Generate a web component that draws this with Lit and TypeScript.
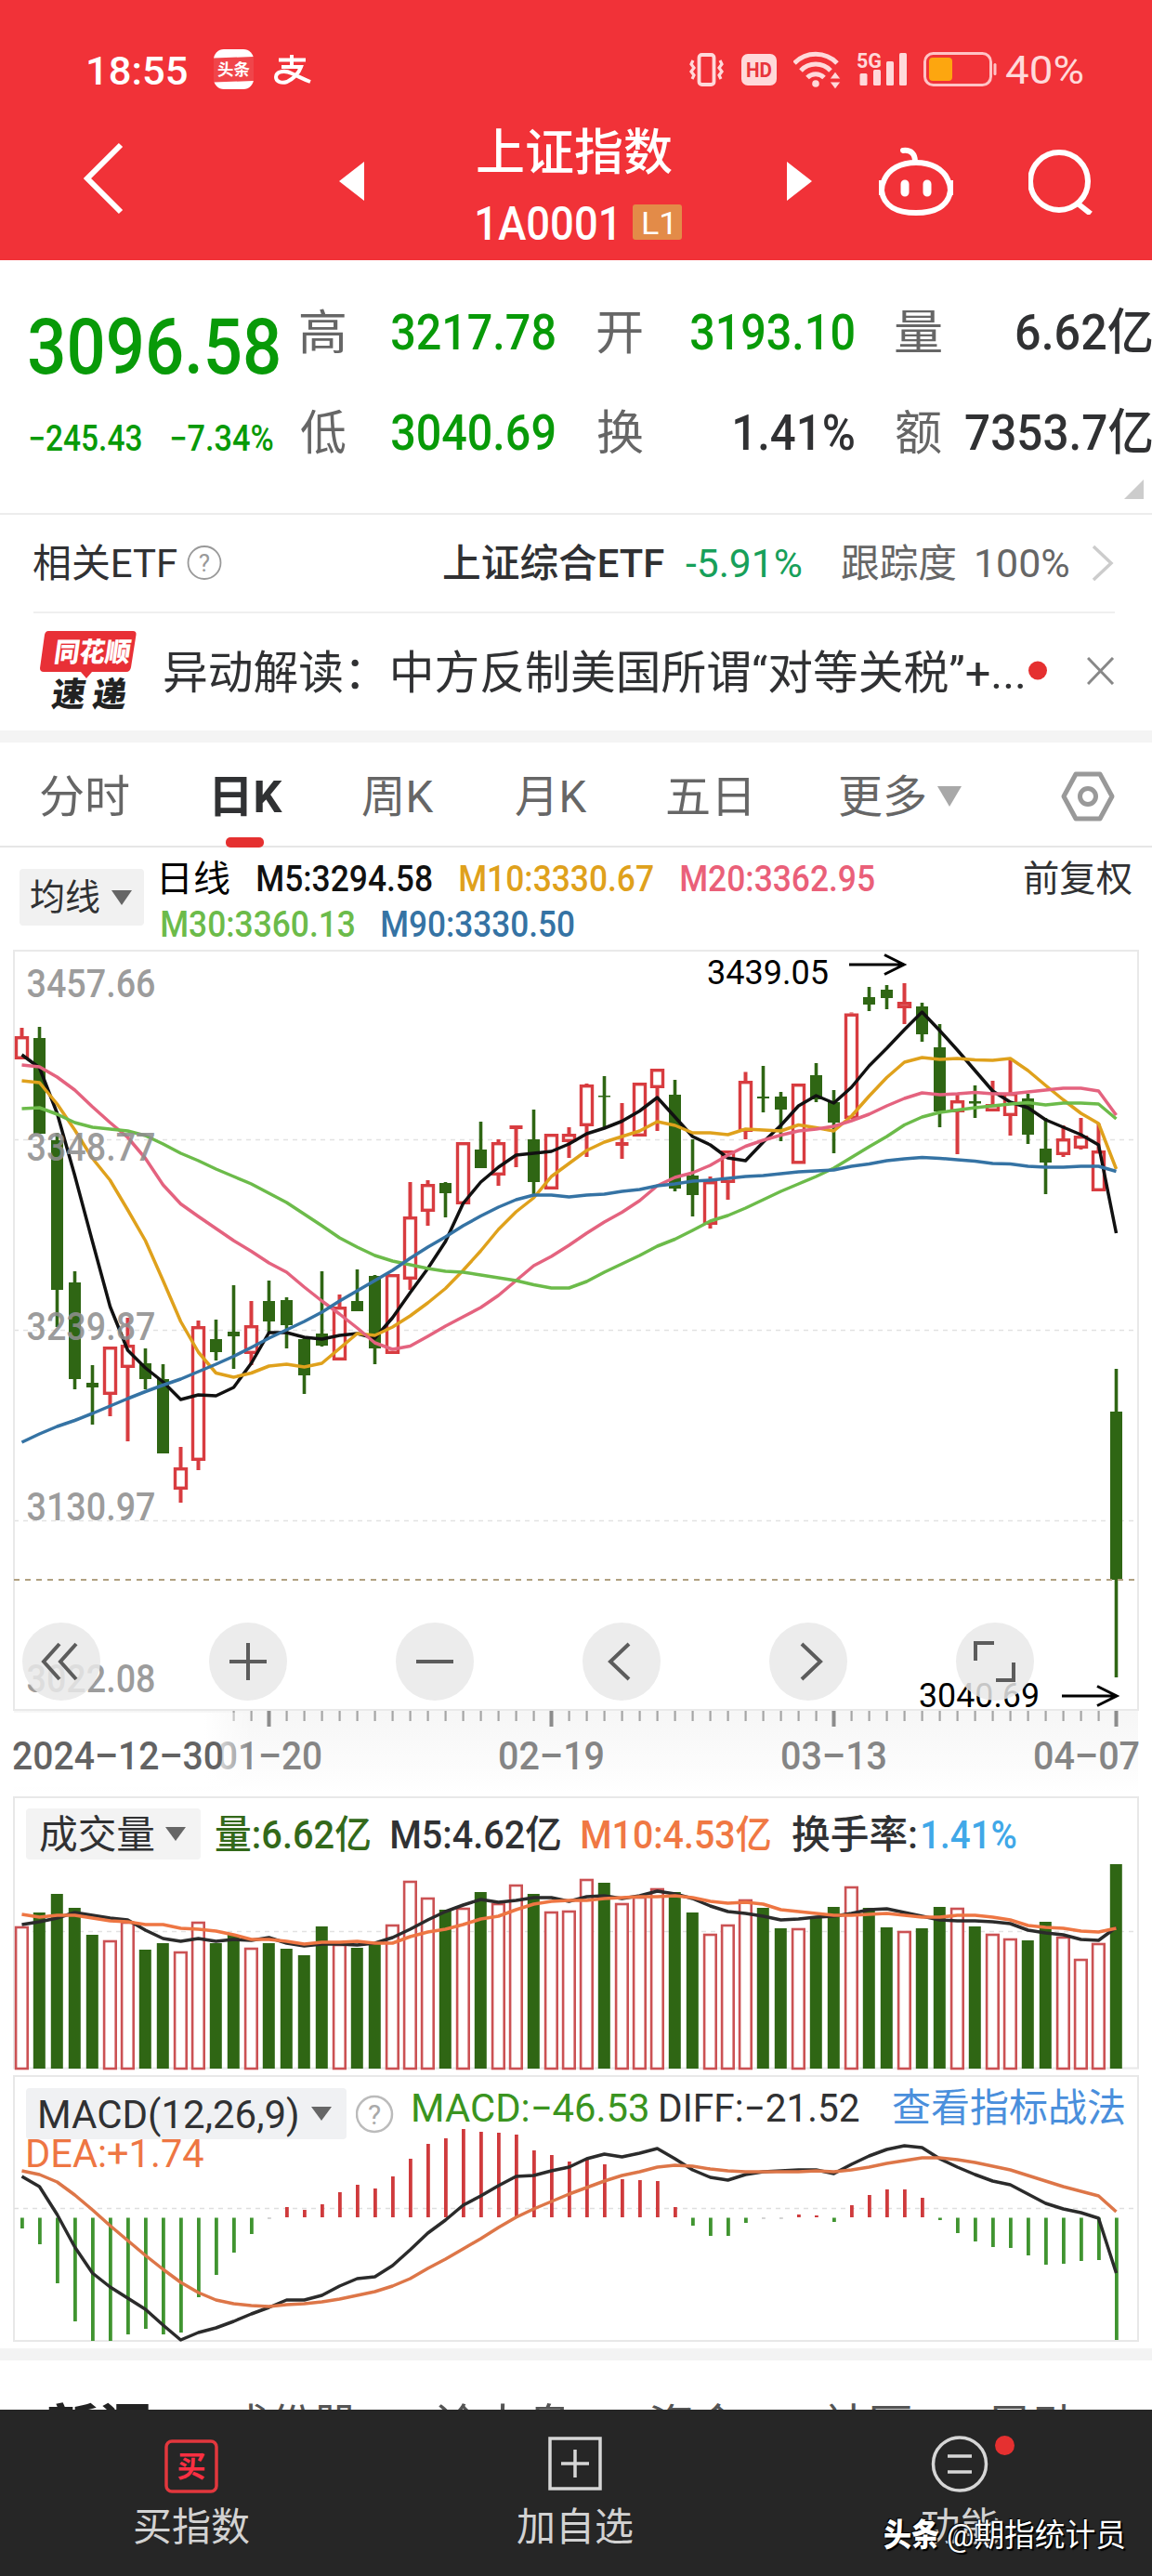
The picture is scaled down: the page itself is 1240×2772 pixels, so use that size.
import { LitElement, html, css, svg } from "lit";
import { customElement, property } from "lit/decorators.js";

/* ---------- chart geometry ---------- */
const STEP = 19;
const X0 = 23.5;
const cx = (i: number) => X0 + i * STEP;
const line = (ys: number[]) => ys.map((y, i) => `${cx(i)},${y}`).join(" ");

/* r = rising, g = falling; then high, body top, body bottom, low */
type Candle = [string, number, number, number, number];
const candles: Candle[] = [
  ["r", 86, 95, 120, 120], ["g", 85, 97, 200, 200], ["g", 199, 207, 368, 408], ["g", 348, 360, 464, 475],
  ["g", 449, 468, 473, 513], ["r", 429, 429, 481, 504], ["r", 398, 427, 452, 531], ["g", 431, 447, 464, 475],
  ["g", 448, 464, 544, 544], ["r", 537, 559, 583, 597], ["r", 401, 407, 552, 562], ["g", 400, 421, 435, 444],
  ["g", 363, 413, 418, 453], ["r", 380, 406, 437, 449], ["g", 358, 380, 402, 414], ["g", 376, 379, 406, 431],
  ["g", 418, 421, 460, 480], ["g", 348, 415, 428, 429], ["r", 373, 386, 444, 444], ["g", 346, 380, 391, 391],
  ["g", 352, 353, 431, 448], ["r", 351, 351, 437, 437], ["r", 252, 289, 357, 368], ["r", 250, 254, 284, 299],
  ["g", 252, 253, 264, 290], ["r", 209, 209, 276, 276], ["g", 187, 217, 237, 237], ["r", 206, 209, 245, 256],
  ["r", 191, 191, 195, 236], ["g", 174, 206, 252, 267], ["r", 200, 200, 260, 260], ["r", 193, 200, 209, 226],
  ["r", 146, 147, 192, 225], ["g", 138, 159, 160.5, 194], ["r", 167, 209, 213, 227], ["r", 145, 145, 203, 203],
  ["r", 130, 130, 151, 197], ["g", 142, 158, 259, 262], ["g", 206, 245, 266, 289], ["r", 246, 251, 298, 302],
  ["r", 218, 218, 253, 271], ["r", 133.5, 143, 198, 206], ["g", 127, 160, 162, 177], ["g", 155, 160, 174, 208],
  ["r", 146, 146, 232.5, 232.5], ["g", 124, 137, 163, 166], ["g", 153, 166, 188, 221], ["r", 69.5, 70.5, 184, 184],
  ["g", 42, 53, 61, 68], ["g", 40, 45, 54, 66], ["r", 38, 58, 65, 82], ["g", 59, 63, 93, 101],
  ["g", 82, 107, 176, 193], ["r", 158, 164, 177, 222], ["g", 148, 165, 167.5, 183], ["r", 143, 168, 176, 176],
  ["r", 119, 156, 181, 202], ["g", 157, 162, 201, 211], ["g", 183, 216, 231, 265], ["r", 191, 205, 223, 225],
  ["r", 183, 202, 216, 217], ["r", 189, 218, 262, 262], ["g", 453, 499, 680, 785],
];
const m5 = [115, 129, 178, 245, 316, 386, 433, 452, 467, 486, 481, 482, 473, 447, 414, 414, 419, 421, 417, 415, 420, 398, 371, 345, 316, 275, 252, 236, 223, 221, 219, 211, 200, 194, 186.5, 175.5, 161, 182, 203, 212, 226, 229, 209, 191, 170, 159, 167, 150, 127, 108, 88, 69, 89, 110, 132, 154, 166, 172, 185, 193, 201, 212, 307];
const m10 = [143, 145, 168, 196, 226.5, 250, 282, 315, 358, 402, 435, 457.5, 462, 457.5, 450, 448, 451, 447, 431, 415, 417, 408, 396, 382, 366.5, 347, 326, 303, 284, 269, 246, 232, 218, 209, 203, 197, 187, 191, 199, 199, 201, 195, 196, 197, 190.5, 193.5, 197, 181, 159.5, 139.5, 123, 118, 120, 119, 120.5, 121, 119, 132, 148, 163.5, 178, 189, 238];
const m20 = [126, 128, 139, 153, 171, 188, 204, 226.5, 255, 275.5, 289, 302, 315, 326.5, 339, 349, 365, 380, 394, 409, 425, 432, 428.5, 418, 407, 397, 387, 374, 358, 342, 332, 320, 307, 295, 284.5, 272, 256, 247, 242, 234, 223, 213.5, 207, 201.5, 197, 195, 192, 186, 179, 170, 162, 156, 158, 157, 155.5, 157, 157, 155, 153, 151, 151, 154, 180];
const m30 = [173, 172, 179, 188, 193, 195, 197, 202, 211, 221, 229, 238, 246, 254, 264, 274, 286.5, 299, 312, 322, 331, 337, 341, 345, 348, 349, 352, 355, 358, 362.5, 366, 366, 359, 349, 340, 331, 321, 313.5, 304, 294, 288, 280, 271, 262, 254, 246, 237, 225.5, 214, 203, 190.5, 182, 177, 174.5, 172, 170, 168, 166.5, 169, 167, 167, 168, 184];
const m90 = [532, 523, 515, 508.5, 501, 493, 485, 477.5, 470.5, 464, 456, 448, 439.5, 430, 420, 411, 402, 392, 380, 369, 358, 347, 334, 322, 311, 299, 288.5, 279, 271, 266, 266, 268, 266, 265, 262, 260, 256, 254, 251, 250, 248, 246, 245, 243, 241, 240, 239, 235, 232.5, 229, 227, 225.5, 226.5, 228, 229.5, 232, 232.5, 235, 236, 236, 235, 235, 240.5];

const volume = [143, 128, 108, 123, 152, 158, 138, 168, 161, 170, 138, 161, 152, 166, 161, 167, 174, 143, 162, 166, 162, 141, 94, 112, 125, 123, 106, 118, 98, 108, 127, 126, 92, 96, 118, 111, 102, 106, 128, 151, 141, 114, 123, 145, 145, 132, 122, 100, 123, 144, 148, 145, 122, 123, 143, 151, 156, 158, 138, 154, 178, 161, 76];
const vol5 = [141, 138, 134, 128, 131, 134, 136, 147, 156, 159, 156, 159, 157, 158, 155, 161, 164, 162, 162, 163, 161, 155, 146, 136, 127, 120, 114, 117, 115, 112, 112, 116, 111, 110, 113, 110, 105, 108, 113, 121, 127, 129, 132, 136, 135, 133, 132, 129, 125, 124, 128, 132, 136, 137, 137, 138, 140, 147, 150, 152, 157, 158, 144];
const vol10 = [130, 133, 131, 131, 134, 137, 138, 141, 141, 145, 146, 148, 152, 157, 157, 159, 162, 160, 160, 159, 161, 161, 154, 149, 146, 141, 135, 132, 125, 119, 116, 115, 115, 113, 112, 111, 111, 110, 112, 116, 118, 117, 119, 125, 127, 129, 131, 131, 130, 129, 131, 133, 133, 131, 131, 133, 136, 142, 144, 145, 148, 149, 145];

const macd = [178, 195, 237, 278, 299, 299, 292, 286, 292, 290, 252, 228, 204, 184, 167.5, 155, 158, 152, 139, 131, 135, 122, 103, 87, 81, 71, 74, 75, 77, 94, 99, 106, 103, 109, 125, 126, 127, 155, 175, 186, 186, 172, 167.5, 167.5, 163, 164, 171, 153, 142, 136, 136, 145, 169, 183, 192, 198, 199, 207, 217, 216, 213, 212, 298];
const diff = [122, 133, 163, 198, 226, 241, 253, 265, 282, 298, 290, 285, 278, 270, 263, 255, 255, 250, 240, 232, 230, 218, 201, 183, 169, 153, 143, 132, 122, 121, 116, 112, 103, 98, 101, 97, 92, 103, 115, 123, 126, 120, 117, 116, 115, 115, 119, 109, 100, 93, 89, 91, 103, 112, 120, 127, 131, 141, 151, 157, 161, 167, 226];
const dea = [116, 120, 128, 142, 158, 175, 191, 207, 222, 236, 247, 255, 259, 261, 262, 260, 259, 257, 254, 250, 246, 240, 232, 221, 211, 200, 189, 177, 166, 157, 149, 141, 134, 127, 121, 117, 112, 110, 111, 114, 116, 117, 117, 117, 117, 116, 117, 115, 112, 108, 105, 102, 102, 104, 107, 111, 115, 121, 127, 133, 138, 143, 160];

const GREEN = "#2f6614";
const RED = "#d83c40";

/* Text whose ink is scaled horizontally to an exact width. */
@customElement("fit-text")
export class FitText extends LitElement {
  @property() text = "";
  @property({ type: Number }) w = 0;
  static styles = css`
    :host { display: block; white-space: pre; flex: none; line-height: 1; }
    .t { display: block; width: max-content; transform-origin: 0 50%; }
  `;
  render() {
    return html`<span class="t">${this.text}</span>`;
  }
  firstUpdated() {
    this.style.width = `${this.w}px`;
    const cs = getComputedStyle(this);
    const ctx = document.createElement("canvas").getContext("2d")!;
    ctx.font = `${cs.fontStyle} ${cs.fontWeight} ${cs.fontSize} ${cs.fontFamily}`;
    const m = ctx.measureText(this.text);
    const ink = m.actualBoundingBoxLeft + m.actualBoundingBoxRight;
    const el = this.renderRoot.querySelector<HTMLElement>(".t")!;
    if (ink > 0) el.style.transform = `translateY(.03em) scaleX(${this.w / ink}) translateX(${m.actualBoundingBoxLeft}px)`;
  }
}

const shared = css`
  :host { display: block; }
  svg { display: block; flex: none; }
`;

@customElement("app-header")
export class AppHeader extends LitElement {
  static styles = [shared, css`
    :host { background: #f13238; color: #fff; height: 280px; }
    .status { display: grid; height: 70px; padding-top: 40px; align-items: center;
      grid-template-columns: 95px 135px 64px 448px 56px 56px 68px 72px 89px auto; }
    .clock { grid-column: 2; font-size: 43px; font-weight: 500; }
    .pct { font-size: 42px; color: #ffd9da; }
    .bar { display: grid; height: 170px; align-items: center;
      grid-template-columns: 90px 275px 149px 333px 98px 162px auto; }
    .back { grid-column: 2; margin-top: -6px; }
    .name { display: flex; height: 70px; margin-top: 18px; align-items: center; font-size: 53px; font-weight: 500; }
    .code { display: flex; height: 82px; align-items: center; gap: 20px; font-size: 50px; font-weight: 500; }
    .badge { width: 53px; height: 38px; border-radius: 3px; background: #e38b48; display: flex;
      align-items: center; justify-content: center; font-size: 34px; font-weight: 400; }
    .mini { font: 700 22px Roboto, "Noto Sans CJK SC", sans-serif; }
    .app { font: 700 17px "Noto Sans CJK SC", sans-serif; }
  `];
  render() {
    return html`
      <div class="status">
        <fit-text class="clock" w="106" text="18:55"></fit-text>
        <svg width="44" height="44" viewBox="0 0 44 44">
          <rect width="43" height="43" rx="11" fill="#fff" />
          <path d="M0 9.500L43 8v26L0 35.500z" fill="#f0454a" />
          <text class="app" x="4" y="28" fill="#fff" textLength="35" lengthAdjust="spacingAndGlyphs">头条</text>
        </svg>
        <svg width="42" height="42" viewBox="0 0 42 42" fill="none" stroke="#fff" stroke-width="4">
          <path d="M20 5v12M6 10.500h29M9 18h21c-3 8-9 13-15 16-6 2-12 0-12-5 0-6 9-8 17-4 7 3 12 6 20 9" />
        </svg>
        <svg width="38" height="38" viewBox="0 0 38 38" fill="none" stroke="#ffd9da" stroke-width="3.800">
          <rect x="10.500" y="3" width="16" height="32" rx="3" />
          <path d="M4 9l-2 4 3 4-3 4 3 4-2 4M33 9l2 4-3 4 3 4-3 4 2 4" stroke-width="3.200" />
        </svg>
        <svg width="38" height="36" viewBox="0 0 38 36">
          <rect y="1" width="38" height="34" rx="7" fill="#ffd9da" />
          <text class="mini" x="5" y="26" fill="#e8353b" textLength="28" lengthAdjust="spacingAndGlyphs">HD</text>
        </svg>
        <svg width="52" height="42" viewBox="0 0 52 42" fill="none" stroke="#ffd9da" stroke-width="5">
          <path d="M1 14a32 32 0 0 1 46 0M8 22a22 22 0 0 1 32 0M15 29.500a12.500 12.500 0 0 1 18 0" />
          <circle cx="24" cy="36" r="3.800" fill="#ffd9da" stroke="none" />
          <path d="M39 31l6-8 6 8zM39 34l6 8 6-8z" fill="#ffd9da" stroke="#f13238" stroke-width="1" />
        </svg>
        <svg width="56" height="42" viewBox="0 0 56 42" fill="#ffd9da">
          <text class="mini" x="0" y="19" textLength="27" lengthAdjust="spacingAndGlyphs">5G</text>
          <rect x="3.500" y="25" width="8" height="13" rx="1.500" /><rect x="18" y="21" width="8" height="17" rx="1.500" />
          <rect x="32" y="12" width="8" height="26" rx="1.500" /><rect x="46" y="3" width="8" height="35" rx="1.500" />
        </svg>
        <svg width="80" height="38" viewBox="0 0 80 38">
          <rect x="1.500" y="1.500" width="71" height="34" rx="9" fill="none" stroke="#ffc3c5" stroke-width="3" />
          <rect x="6" y="6" width="25" height="25" rx="4" fill="#fda60f" />
          <rect x="75.500" y="12" width="3" height="13" rx="1.500" fill="#ffc3c5" />
        </svg>
        <fit-text class="pct" w="82" text="40%"></fit-text>
      </div>
      <div class="bar">
        <svg class="back" width="44" height="78" viewBox="0 0 44 78" fill="none" stroke="#fff" stroke-width="6">
          <path d="M40 3L4 39l36 36" />
        </svg>
        <svg width="28" height="42" viewBox="0 0 28 42"><path d="M27 0v42L0 21z" fill="#fff" /></svg>
        <div>
          <div class="name"><fit-text w="209" text="上证指数"></fit-text></div>
          <div class="code">
            <fit-text w="147" text="1A0001"></fit-text>
            <span class="badge"><fit-text w="31" text="L1"></fit-text></span>
          </div>
        </div>
        <svg width="28" height="42" viewBox="0 0 28 42"><path d="M0 0v42l27-21z" fill="#fff" /></svg>
        <svg width="82" height="78" viewBox="0 0 82 78" fill="none" stroke="#fff" stroke-width="6">
          <path d="M41 19C24 19 12 26 7 37c-2 4-3 8-3 12 2 17 17 24 37 24s35-7 37-24c0-4-1-8-3-12-5-11-17-18-34-18z" />
          <path d="M40 18c0-8-4-13-13-12" stroke-linecap="round" />
          <path d="M4 38v16M78 38v16" />
          <path d="M29 42v9M53 42v9" stroke-width="9" stroke-linecap="round" />
        </svg>
        <svg width="72" height="72" viewBox="0 0 72 72" fill="none" stroke="#fff" stroke-width="6">
          <circle cx="33" cy="36" r="31" /><path d="M53 60l14 11" />
        </svg>
      </div>`;
  }
}

@customElement("quote-summary")
export class QuoteSummary extends LitElement {
  static styles = [shared, css`
    :host { position: relative; height: 272px; border-bottom: 2px solid #ececec; background: #fff; overflow: hidden; }
    .wrap { display: grid; grid-template-columns: 292px auto; padding: 22px 0 0 32px; }
    .price { height: 138px; display: flex; align-items: center; font-size: 84px; font-weight: 500; color: #089a08; }
    .chg { height: 62px; display: flex; align-items: center; gap: 32px; font-size: 38px; font-weight: 500; color: #089a08; }
    .cells { display: grid; grid-template-columns: 49px 224px 46px 49px 227px 45px 49px 227px; grid-auto-rows: 108px; align-items: center; }
    .k { font-size: 51px; color: #666; }
    .v { font-size: 53px; font-weight: 500; color: #303133; justify-self: end; }
    .g { color: #089a08; }
    .gap { grid-column: span 2; display: grid; grid-template-columns: 46px 49px; }
    .gap2 { grid-column: span 2; display: grid; grid-template-columns: 45px 49px; }
    .gap .k, .gap2 .k { grid-column: 2; }
    .corner { position: absolute; right: 9px; bottom: 15px; }
  `];
  render() {
    return html`
      <div class="wrap">
        <div>
          <div class="price"><fit-text w="268" text="3096.58"></fit-text></div>
          <div class="chg"><fit-text w="120" text="−245.43"></fit-text><fit-text w="110" text="−7.34%"></fit-text></div>
        </div>
        <div class="cells">
          <fit-text class="k" w="47" text="高"></fit-text><fit-text class="v g" w="175" text="3217.78"></fit-text>
          <div class="gap"><fit-text class="k" w="48" text="开"></fit-text></div><fit-text class="v g" w="175" text="3193.10"></fit-text>
          <div class="gap2"><fit-text class="k" w="49" text="量"></fit-text></div><fit-text class="v" w="146" text="6.62亿"></fit-text>
          <fit-text class="k" w="48" text="低"></fit-text><fit-text class="v g" w="175" text="3040.69"></fit-text>
          <div class="gap"><fit-text class="k" w="49" text="换"></fit-text></div><fit-text class="v" w="128" text="1.41%"></fit-text>
          <div class="gap2"><fit-text class="k" w="49" text="额"></fit-text></div><fit-text class="v" w="201" text="7353.7亿"></fit-text>
        </div>
      </div>
      <svg class="corner" width="21" height="21" viewBox="0 0 21 21"><path d="M21 0v21H0z" fill="#ccc" /></svg>`;
  }
}

@customElement("info-rows")
export class InfoRows extends LitElement {
  static styles = [shared, css`
    :host { background: #fff; border-bottom: 13px solid #f4f4f4; }
    .etf { display: grid; height: 104px; align-items: center; font-size: 42px; color: #303133; margin: 0 40px 0 36px;
      grid-template-columns: 165px 277px 260px 168px 145px 124px auto; border-bottom: 2px solid #efefef; }
    .b { font-weight: 500; }
    .up { color: #17a05a; }
    .dim { color: #666; }
    .news { display: grid; height: 126px; align-items: center; grid-template-columns: 134px 930px 63px auto; padding-left: 43px; }
    .txt { font-size: 49px; color: #303133; }
    .logo1 { font: 900 29px "Noto Sans CJK SC", sans-serif; }
    .logo2 { font: 900 36px "Noto Sans CJK SC", sans-serif; }
    .q { font: 400 26px Roboto, sans-serif; }
    .lift { margin-top: -3px; }
  `];
  render() {
    return html`
      <div class="etf">
        <fit-text w="154" text="相关ETF"></fit-text>
        <svg width="38" height="38" viewBox="0 0 38 38">
          <circle cx="19" cy="18.500" r="17.500" fill="none" stroke="#999" stroke-width="1.800" />
          <text class="q" x="19" y="28" text-anchor="middle" fill="#999">?</text>
        </svg>
        <fit-text class="b" w="237" text="上证综合ETF"></fit-text>
        <fit-text class="up" w="124" text="-5.91%"></fit-text>
        <fit-text class="dim" w="123" text="跟踪度"></fit-text>
        <fit-text class="dim" w="99" text="100%"></fit-text>
        <svg width="24" height="40" viewBox="0 0 24 40" fill="none" stroke="#ccc" stroke-width="3.500"><path d="M2 2l19 18L2 38" /></svg>
      </div>
      <div class="news">
        <svg width="106" height="90" viewBox="0 0 106 90">
          <path d="M9 1h91q4 0 3.500 4L98 40q-1 5-5 5H56l-6 7-6-7H4q-4 0-4-4L5 5q1-4 4-4z" fill="#e83036" />
          <g transform="skewX(-8)">
            <text class="logo1" x="19" y="34" fill="#fff" textLength="82" lengthAdjust="spacingAndGlyphs">同花顺</text>
            <text class="logo2" x="23" y="82" fill="#222" textLength="80" lengthAdjust="spacing">速递</text>
          </g>
        </svg>
        <fit-text class="txt" w="924" text="异动解读：中方反制美国所谓“对等关税”+..."></fit-text>
        <svg class="lift" width="21" height="21" viewBox="0 0 21 21"><circle cx="10" cy="10.500" r="10" fill="#e53030" /></svg>
        <svg class="lift" width="30" height="30" viewBox="0 0 30 30" stroke="#888" stroke-width="3"><path d="M1 1l27 28M28 1L1 29" /></svg>
      </div>`;
  }
}

@customElement("period-tabs")
export class PeriodTabs extends LitElement {
  static styles = [shared, css`
    .tabs { display: grid; height: 111px; align-items: center; padding-left: 44px; font-size: 48px; color: #666;
      grid-template-columns: 187px 159px 165px 163px 186px 105px 133px auto; border-bottom: 2px solid #e6e6e6; background: #fff; }
    .tabs > * { position: relative; top: 2px; }
    .on { color: #303133; font-weight: 700; }
    .on::after { content: ""; position: absolute; left: 12px; bottom: -31px; width: 41px; height: 11px; border-radius: 5px; background: #e53030; }
    .legend { display: grid; grid-template-columns: 153px 926px auto; height: 110px; padding-left: 21px; background: #fff; font-size: 39px; }
    .pick { display: flex; align-items: center; gap: 13px; width: 122px; height: 61px; margin-top: 23px; padding-left: 12px; background: #f1f1f1; border-radius: 4px; color: #303133; }
    .lines { padding-top: 9px; }
    .ln { display: flex; height: 49px; align-items: center; gap: 30px; }
    .adj { height: 49px; padding-top: 9px; display: flex; align-items: center; color: #303133; margin-left: 3px; }
    .c1 { color: #111; } .c2 { color: #dfa11c; } .c3 { color: #ea6079; } .c4 { color: #6cbb4a; } .c5 { color: #3573a4; }
    .m { font-weight: 500; }
  `];
  render() {
    return html`
      <div class="tabs">
        <fit-text w="95" text="分时"></fit-text>
        <div class="on"><fit-text w="73" text="日K"></fit-text></div>
        <fit-text w="77" text="周K"></fit-text>
        <fit-text w="77" text="月K"></fit-text>
        <fit-text w="88" text="五日"></fit-text>
        <fit-text w="92" text="更多"></fit-text>
        <svg width="26" height="22" viewBox="0 0 26 22"><path d="M0 0h26L13 22z" fill="#a8a8a8" /></svg>
        <svg width="58" height="54" viewBox="0 0 58 54" fill="none" stroke="#999" stroke-width="5" stroke-linejoin="round">
          <path d="M16 3h26l13 24-13 24H16L3 27z" /><circle cx="29" cy="27" r="8.500" />
        </svg>
      </div>
      <div class="legend">
        <div class="pick"><fit-text w="74" text="均线"></fit-text>
          <svg width="22" height="16" viewBox="0 0 22 16"><path d="M0 0h22L11 16z" fill="#666" /></svg></div>
        <div class="lines">
          <div class="ln"><fit-text w="73" text="日线"></fit-text><fit-text class="m c1" w="188" text="M5:3294.58"></fit-text>
            <fit-text class="m c2" w="208" text="M10:3330.67"></fit-text><fit-text class="m c3" w="208" text="M20:3362.95"></fit-text></div>
          <div class="ln"><fit-text class="m c4" w="207" text="M30:3360.13"></fit-text><fit-text class="m c5" w="207" text="M90:3330.50"></fit-text></div>
        </div>
        <div class="adj"><fit-text w="115" text="前复权"></fit-text></div>
      </div>`;
  }
}

@customElement("price-chart")
export class PriceChart extends LitElement {
  static styles = [shared, css`
    :host { position: relative; height: 911px; background: #fff; }
    .axis { font: 500 42px Roboto, sans-serif; fill: #8e8e8e; fill-opacity: .88; }
    .tag { font: 400 36px Roboto, sans-serif; fill: #000; }
    .date { font: 500 42px Roboto, sans-serif; fill: #858585; }
    .first { fill: #636363; }
    .tools { position: absolute; left: 24px; top: 724px; display: flex; gap: 117px; }
    .btn { width: 84px; height: 84px; border-radius: 50%; background: rgba(233, 233, 233, .85); display: flex; align-items: center; justify-content: center; }
  `];
  candle([t, h, a, b, l]: Candle, i: number) {
    const x = cx(i);
    if (t === "g") {
      return svg`<rect x=${x - 1.8} y=${h} width="3.600" height=${l - h} fill=${GREEN} />
        <rect x=${x - 6.5} y=${a} width="13" height=${Math.max(1.5, b - a)} fill=${GREEN} />`;
    }
    return svg`<rect x=${x - 2} y=${h} width="4" height=${a - h} fill=${RED} />
      <rect x=${x - 2} y=${b} width="4" height=${l - b} fill=${RED} />
      ${b - a < 7
        ? svg`<rect x=${x - 7} y=${a} width="14" height=${b - a} fill=${RED} />`
        : svg`<rect x=${x - 6} y=${a + 1.7} width="12" height=${b - a - 3.4} fill="#fff" stroke=${RED} stroke-width="3.400" />`}`;
  }
  render() {
    const btn = (d: string) => html`<span class="btn"><svg width="52" height="52" viewBox="-26 -26 52 52" fill="none" stroke="#5c5c5c" stroke-width="4"><path d=${d} /></svg></span>`;
    return html`
      <svg width="1240" height="911" viewBox="0 2 1240 911">
        <defs>
          <linearGradient id="fade" x1="0" x2="1"><stop offset="0" stop-color="#fff" /><stop offset=".800" stop-color="#fff" /><stop offset="1" stop-color="#fff" stop-opacity="0" /></linearGradient>
          <linearGradient id="shade" x1="0" x2="0" y1="0" y2="1"><stop offset="0" stop-color="#f6f6f6" /><stop offset=".700" stop-color="#fcfcfc" /><stop offset="1" stop-color="#fff" /></linearGradient>
        </defs>
        <rect x="15" y="821" width="1210" height="88" fill="url(#shade)" />
        <path d="M15 206.500H1225M15 411.500H1225M15 616.500H1225" stroke="#e2e2e2" stroke-width="1.500" stroke-dasharray="5 5" />
        <rect x="15" y="3" width="1210" height="817" fill="none" stroke="#e9e9e9" stroke-width="2" />
        ${candles.map((c, i) => this.candle(c, i))}
        <path d="M15 680H1225" stroke="#b0a080" stroke-width="2" stroke-dasharray="6 6" />
        <g fill="none" stroke-width="3.500" stroke-linejoin="round">
          <polyline points=${line(m5)} stroke="#111" />
          <polyline points=${line(m10)} stroke="#dfa11c" />
          <polyline points=${line(m20)} stroke="#e4637f" />
          <polyline points=${line(m30)} stroke="#6cbb4a" />
          <polyline points=${line(m90)} stroke="#3573a4" />
        </g>
        ${["3457.66", "3348.77", "3239.87", "3130.97", "3022.08"].map((t, i) =>
          svg`<text class="axis" x="28.500" y=${[53, 228.5, 422, 616, 801][i]} textLength="139" lengthAdjust="spacingAndGlyphs">${t}</text>`)}
        <text class="tag" x="761" y="39" textLength="131" lengthAdjust="spacingAndGlyphs">3439.05</text>
        <text class="tag" x="989" y="816.500" textLength="130" lengthAdjust="spacingAndGlyphs">3040.69</text>
        <path d="M914 18h59M952 7.500l21 10.500-21 10.500M1143 805h59M1181 794.500l21 10.500-21 10.500" fill="none" stroke="#000" stroke-width="3" />
        ${candles.map((_, i) => i < 12 ? "" : (i - 14) % 16 === 0
          ? svg`<rect x=${cx(i) - 2} y="821" width="4" height="17" fill="#8c8c8c" />`
          : svg`<rect x=${cx(i) - 1} y="821" width="2.200" height="11" fill="#a5a5a5" />`)}
        <text class="date" x="234" y="883.500" textLength="113" lengthAdjust="spacingAndGlyphs">01–20</text>
        <rect x="15" y="823" width="256" height="80" fill="url(#fade)" />
        <text class="date first" x="13" y="883.500" textLength="228" lengthAdjust="spacingAndGlyphs">2024–12–30</text>
        <text class="date" x="536" y="883.500" textLength="115" lengthAdjust="spacingAndGlyphs">02–19</text>
        <text class="date" x="840" y="883.500" textLength="115" lengthAdjust="spacingAndGlyphs">03–13</text>
        <text class="date" x="1112" y="883.500" textLength="115" lengthAdjust="spacingAndGlyphs">04–07</text>
      </svg>
      <div class="tools">
        ${btn("M-2 -19L-19 0l17 19M16 -19L-1 0l17 19")}
        ${btn("M-20 0h40M0 -20v40")}
        ${btn("M-20 0h40")}
        ${btn("M8 -19L-12 0l20 19")}
        ${btn("M-7 -19L13 0l-20 19")}
        ${btn("M-21 -1V-20h20M20 1v19H1")}
      </div>`;
  }
}

@customElement("volume-panel")
export class VolumePanel extends LitElement {
  static styles = [shared, css`
    :host { position: relative; height: 300px; background: #fff; }
    .bg { position: absolute; left: 0; top: 0; }
    .head { position: relative; display: flex; align-items: center; gap: 24px; height: 55px; padding: 13px 0 0 28px; font-size: 42px; font-weight: 500; color: #303133; }
    .pick { display: flex; align-items: center; gap: 12px; width: 173px; height: 55px; padding-left: 15px; background: #f3f3f3; border-radius: 4px; font-weight: 400; margin-right: -8px; }
    .g { color: #33691a; } .o { color: #f07843; } .b { color: #40a8e8; margin-left: -17px; }
  `];
  render() {
    return html`
      <svg class="bg" width="1240" height="300" viewBox="0 3 1240 300">
        <path d="M15 4H1225V295.500H15z" fill="none" stroke="#e8e8e8" stroke-width="2" />
        <path d="M15 148.500H1225" stroke="#e2e2e2" stroke-width="1.500" stroke-dasharray="5 5" />
        ${volume.map((y, i) => candles[i][0] === "g"
          ? svg`<rect x=${cx(i) - 6.7} y=${y} width="13" height=${296 - y} fill=${GREEN} />`
          : svg`<rect x=${cx(i) - 6.4} y=${y + 1} width="12.600" height=${295 - y} fill="#fff" stroke="#cb5254" stroke-width="2.600" />`)}
        <polyline points=${line(vol5)} fill="none" stroke="#2b2b2b" stroke-width="3.500" stroke-linejoin="round" />
        <polyline points=${line(vol10)} fill="none" stroke="#ee7643" stroke-width="3.700" stroke-linejoin="round" />
      </svg>
      <div class="head">
        <div class="pick"><fit-text w="123" text="成交量"></fit-text>
          <svg width="22" height="15" viewBox="0 0 22 15"><path d="M0 0h22L11 15z" fill="#666" /></svg></div>
        <fit-text class="g" w="166" text="量:6.62亿"></fit-text>
        <fit-text w="181" text="M5:4.62亿"></fit-text>
        <fit-text class="o" w="202" text="M10:4.53亿"></fit-text>
        <fit-text w="133" text="换手率:"></fit-text>
        <fit-text class="b" w="101" text="1.41%"></fit-text>
      </div>`;
  }
}

@customElement("macd-panel")
export class MacdPanel extends LitElement {
  static styles = [shared, css`
    :host { position: relative; height: 294px; background: #fff; border-bottom: 13px solid #f3f3f3; overflow: hidden; }
    .bg { position: absolute; left: 0; top: 0; }
    .head { position: relative; display: grid; align-items: center; height: 55px; padding: 14px 0 0 28px; font-size: 42px; color: #303133;
      grid-template-columns: 355px 62px 266px 250px auto; }
    .pick { display: flex; align-items: center; gap: 15px; width: 330px; height: 55px; padding-left: 15px; background: #f0f1f3; border-radius: 4px; }
    .up { margin-top: -13px; }
    .g { color: #3a9420; } .l { color: #4a8fdc; }
    .dea { position: relative; display: block; margin: -6px 0 0 30px; font-size: 42px; color: #ee7643; }
    .q { font: 400 30px Roboto, sans-serif; }
  `];
  render() {
    return html`
      <svg class="bg" width="1240" height="294" viewBox="0 13 1240 294">
        <path d="M15 14H1225V299H15z" fill="none" stroke="#e8e8e8" stroke-width="2" />
        <path d="M15 156.500H1225" stroke="#dedede" stroke-width="1.500" stroke-dasharray="5 5" />
        ${macd.map((y, i) => {
          const up = y < 166;
          const flat = y === 167.5;
          return svg`<rect x=${cx(i) - 1.5} y=${up ? y : 166.5} width="3.800" height=${up ? 166 - y : y - 166.5} fill=${flat ? "#aaa" : up ? "#cf3a3c" : "#409430"} />`;
        })}
        <polyline points=${line(diff)} fill="none" stroke="#2b2b2b" stroke-width="3.500" stroke-linejoin="round" />
        <polyline points=${line(dea)} fill="none" stroke="#dd7648" stroke-width="3.500" stroke-linejoin="round" />
      </svg>
      <div class="head">
        <div class="pick"><fit-text w="277" text="MACD(12,26,9)"></fit-text>
          <svg width="22" height="15" viewBox="0 0 22 15"><path d="M0 0h22L11 15z" fill="#666" /></svg></div>
        <svg width="42" height="42" viewBox="0 0 42 42">
          <circle cx="20" cy="21" r="19" fill="none" stroke="#bbb" stroke-width="2.500" />
          <text class="q" x="20" y="32" text-anchor="middle" fill="#aaa">?</text>
        </svg>
        <fit-text class="up g" w="252" text="MACD:−46.53"></fit-text>
        <fit-text class="up" w="214" text="DIFF:−21.52"></fit-text>
        <fit-text class="up l" w="249" text="查看指标战法"></fit-text>
      </div>
      <fit-text class="dea" w="189" text="DEA:+1.74"></fit-text>`;
  }
}

@customElement("bottom-area")
export class BottomArea extends LitElement {
  static styles = [shared, css`
    .peek { display: grid; height: 53px; overflow: hidden; background: #fff; padding-left: 50px; font-size: 46px; color: #555;
      grid-template-columns: 193px 225px 232px 186px 179px auto; }
    .peek fit-text { margin-top: 45px; }
    .hot { font-weight: 900; color: #222; }
    .nav { position: relative; display: grid; grid-template-columns: 412px 414px 414px; height: 179px; background: #262626; color: #d2d2d2; font-size: 42px; }
    .item { display: flex; flex-direction: column; align-items: center; padding-top: 27px; }
    .item svg { height: 64px; }
    .lab { margin-top: 14px; }
    .buy { font: 700 31px "Noto Sans CJK SC", sans-serif; }
    .dot { position: absolute; left: 1071px; top: 28px; width: 21px; height: 21px; border-radius: 50%; background: #e53030; }
    .mark { position: absolute; left: 951px; top: 117px; display: flex; align-items: center; gap: 9px; color: #fff; font-size: 34px;
      text-shadow: 2px 2px 1px #000, -1px -1px 1px #000; }
    .mark b { font-weight: 900; }
  `];
  render() {
    return html`
      <div class="peek">
        <fit-text class="hot" w="110" text="新闻"></fit-text>
        <fit-text w="142" text="成份股"></fit-text>
        <fit-text w="146" text="诊大盘"></fit-text>
        <fit-text w="96" text="资金"></fit-text>
        <fit-text w="95" text="社区"></fit-text>
        <fit-text w="93" text="异动"></fit-text>
      </div>
      <div class="nav">
        <div class="item">
          <svg width="58" height="64" viewBox="0 0 58 64">
            <rect x="2" y="7" width="54" height="54" rx="6" fill="none" stroke="#e2373d" stroke-width="3.500" />
            <text class="buy" x="29" y="45" text-anchor="middle" fill="#fb2f42">买</text>
          </svg>
          <fit-text class="lab" w="123" text="买指数"></fit-text>
        </div>
        <div class="item">
          <svg width="58" height="64" viewBox="0 0 58 64" fill="none" stroke="#d6d6d6" stroke-width="3.500">
            <rect x="2" y="4" width="54" height="54" /><path d="M14 31h30M29 16v30" />
          </svg>
          <fit-text class="lab" w="124" text="加自选"></fit-text>
        </div>
        <div class="item">
          <svg width="62" height="64" viewBox="0 0 62 64" fill="none" stroke="#d6d6d6" stroke-width="3.500">
            <circle cx="31" cy="31.500" r="28.500" /><path d="M18 23h26M18 40h26" />
          </svg>
          <fit-text class="lab" w="83" text="功能"></fit-text>
        </div>
        <span class="dot"></span>
        <div class="mark"><b><fit-text w="60" text="头条"></fit-text></b><fit-text w="190" text="@期指统计员"></fit-text></div>
      </div>`;
  }
}

@customElement("app-root")
export class AppRoot extends LitElement {
  static styles = css`
    :host { display: block; width: 1240px; height: 2772px; overflow: hidden; background: #fff; font-family: Roboto, "Noto Sans CJK SC", sans-serif; }
  `;
  render() {
    return html`
      <app-header></app-header>
      <quote-summary></quote-summary>
      <info-rows></info-rows>
      <period-tabs></period-tabs>
      <price-chart></price-chart>
      <volume-panel></volume-panel>
      <macd-panel></macd-panel>
      <bottom-area></bottom-area>`;
  }
}
